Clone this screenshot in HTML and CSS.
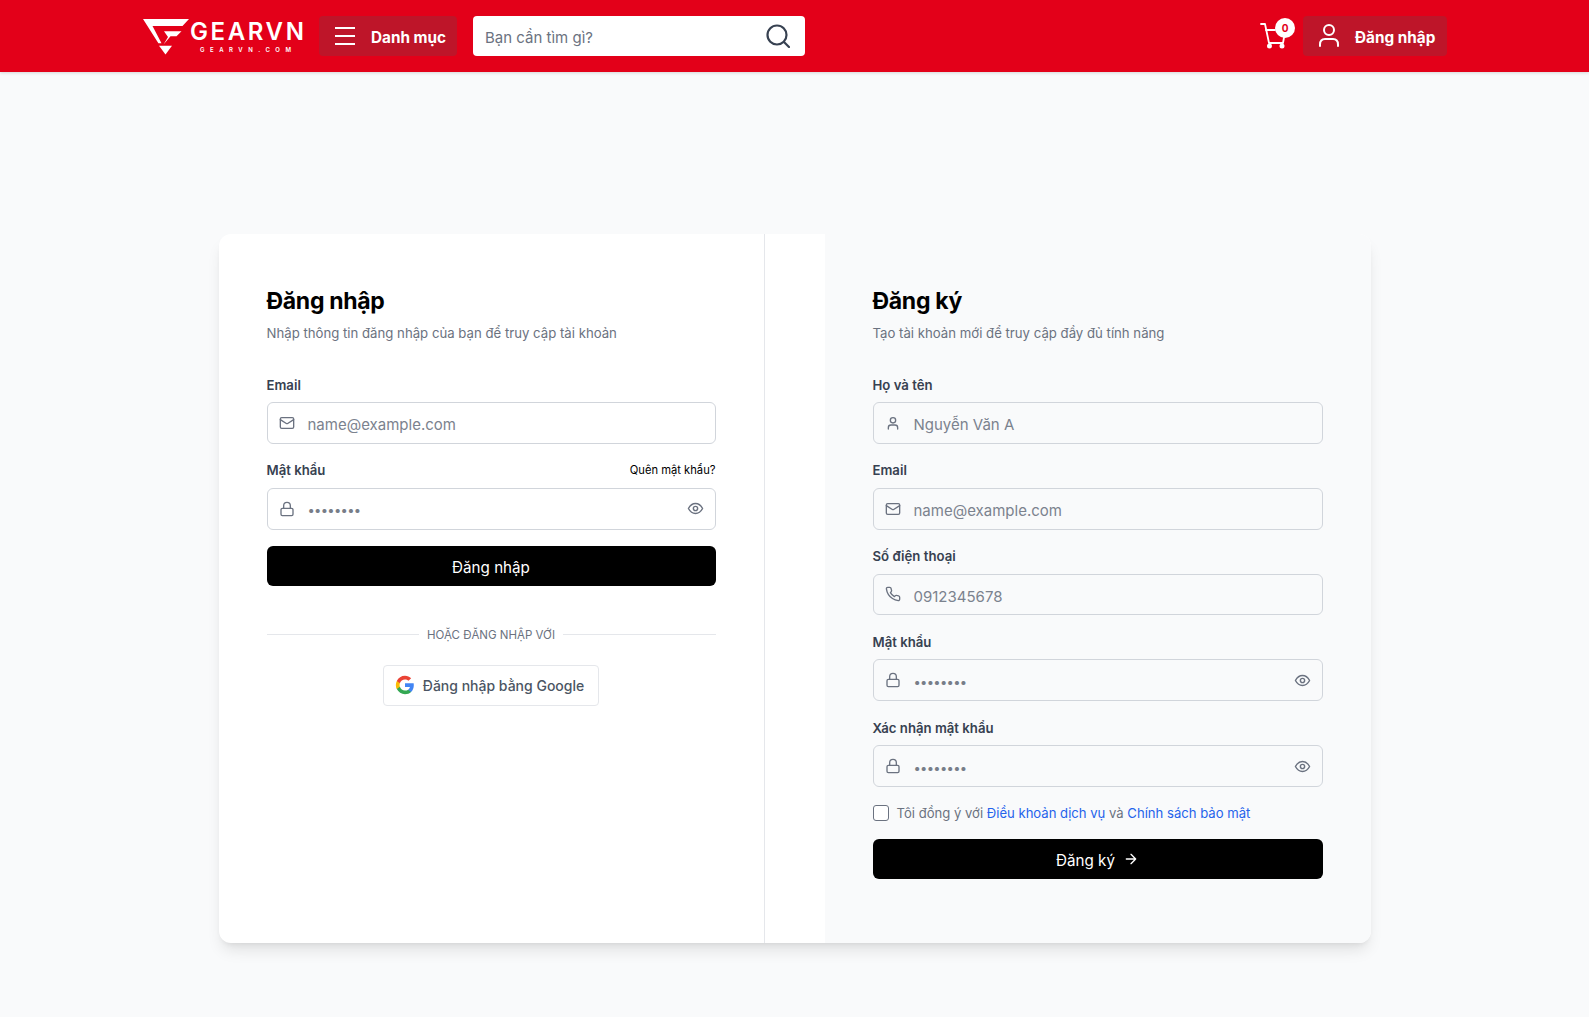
FILE: index.html
```html
<!doctype html>
<html lang="vi">
<head>
<meta charset="utf-8">
<title>Đăng nhập - GEARVN</title>
<link rel="stylesheet" href="styles.css">
</head>
<body>
<header class="topbar">
	<div class="topbar-inner">
		<a class="logo">
			<svg class="logo-mark" viewBox="0 0 46 36" width="46" height="36">
				<path fill="#fff" d="M0 0H46L39.500 7H9.500L18.500 24.300H15.400Z"/>
				<path fill="#fff" d="M21 12.200H38.500L33.500 17.200H27.500L20.500 25.500L25 18Z"/>
				<path fill="#fff" d="M16 26.800H29L22.500 35.500Z"/>
			</svg>
			<span class="logo-text">
				<span class="logo-name">GEARVN</span>
				<span class="logo-url">GEARVN.COM</span>
			</span>
		</a>
		<button class="bar-btn menu-btn">
			<svg viewBox="0 0 24 24" width="24" height="24" fill="none" stroke="#fff" stroke-width="2"><path d="M2 4H22M2 12H22M2 20H22"/></svg>
			<span>Danh mục</span>
		</button>
		<div class="search">
			<span class="search-text">Bạn cần tìm gì?</span>
			<svg viewBox="0 0 24 24" width="24" height="24" fill="none" stroke="#374151" stroke-width="2.200" stroke-linecap="round"><circle cx="11" cy="11" r="9.500"/><path d="M18 18L23 23"/></svg>
		</div>
		<div class="bar-right">
			<div class="cart">
				<svg viewBox="0 0 26 26" width="26" height="26" fill="none" stroke="#fff" stroke-width="1.800" stroke-linecap="round" stroke-linejoin="round"><path d="M1 1H5L9 20H23L25 9"/><path d="M6 7H15"/><circle cx="9.500" cy="23" r="1.600" fill="#fff"/><circle cx="22" cy="23" r="1.600" fill="#fff"/></svg>
				<span class="cart-badge">0</span>
			</div>
			<button class="bar-btn login-btn">
				<svg viewBox="0 0 24 24" width="24" height="24" fill="none" stroke="#fff" stroke-width="2" stroke-linecap="round"><circle cx="12" cy="6" r="5"/><path d="M3 22V20.500C3 17 5 15 8 15H16C19 15 21 17 21 20.500V22"/></svg>
				<span>Đăng nhập</span>
			</button>
		</div>
	</div>
</header>

<main class="page">
	<div class="auth-card">
		<section class="panel panel-login">
			<h2>Đăng nhập</h2>
			<p class="sub">Nhập thông tin đăng nhập của bạn để truy cập tài khoản</p>

			<div class="field">
				<div class="label-row"><label>Email</label></div>
				<div class="input">
					<svg class="ico" viewBox="0 0 24 24"><rect x="2" y="4" width="20" height="16" rx="2"/><path d="M22 7L13 12.700a2 2 0 0 1-2 0L2 7"/></svg>
					<span class="ph">name@example.com</span>
				</div>
			</div>
			<div class="field">
				<div class="label-row"><label>Mật khẩu</label><a class="forgot">Quên mật khẩu?</a></div>
				<div class="input">
					<svg class="ico" viewBox="0 0 24 24"><rect x="3" y="11" width="18" height="11" rx="2"/><path d="M7 11V7a5 5 0 0 1 10 0v4"/></svg>
					<span class="dots">••••••••</span>
					<svg class="ico eye" viewBox="0 0 24 24"><path d="M2 12C5 6.500 8.500 5 12 5S19 6.500 22 12C19 17.500 15.500 19 12 19S5 17.500 2 12Z"/><circle cx="12" cy="12" r="3"/></svg>
				</div>
			</div>
			<button class="submit submit-login"><span>Đăng nhập</span></button>

			<div class="divider"><span>HOẶC ĐĂNG NHẬP VỚI</span></div>

			<div class="google-wrap">
				<button class="google-btn">
					<svg viewBox="0 0 24 24" width="20" height="20"><path fill="#4285F4" d="M22.560 12.250c0-.780-.070-1.530-.200-2.250H12v4.260h5.920c-.260 1.370-1.040 2.530-2.210 3.310v2.770h3.570c2.080-1.920 3.280-4.740 3.280-8.090z"/><path fill="#34A853" d="M12 23c2.970 0 5.460-.980 7.280-2.660l-3.570-2.770c-.980.660-2.230 1.060-3.710 1.060-2.860 0-5.290-1.930-6.160-4.530H2.180v2.840C3.990 20.530 7.700 23 12 23z"/><path fill="#FBBC05" d="M5.840 14.090c-.220-.660-.350-1.360-.350-2.090s.130-1.430.350-2.090V7.070H2.180C1.430 8.550 1 10.220 1 12s.430 3.450 1.180 4.930l3.660-2.840z"/><path fill="#EA4335" d="M12 5.380c1.620 0 3.060.560 4.210 1.640l3.150-3.150C17.450 2.090 14.970 1 12 1 7.700 1 3.990 3.470 2.180 7.070l3.660 2.840c.870-2.600 3.300-4.530 6.160-4.530z"/></svg>
					<span>Đăng nhập bằng Google</span>
				</button>
			</div>
		</section>

		<section class="panel panel-register">
			<h2>Đăng ký</h2>
			<p class="sub">Tạo tài khoản mới để truy cập đầy đủ tính năng</p>

			<div class="field">
				<div class="label-row"><label>Họ và tên</label></div>
				<div class="input">
					<svg class="ico" viewBox="0 0 24 24"><circle cx="12" cy="8" r="4"/><path d="M5 21V19a4 4 0 0 1 4-4H15a4 4 0 0 1 4 4V21"/></svg>
					<span class="ph">Nguyễn Văn A</span>
				</div>
			</div>
			<div class="field">
				<div class="label-row"><label>Email</label></div>
				<div class="input">
					<svg class="ico" viewBox="0 0 24 24"><rect x="2" y="4" width="20" height="16" rx="2"/><path d="M22 7L13 12.700a2 2 0 0 1-2 0L2 7"/></svg>
					<span class="ph">name@example.com</span>
				</div>
			</div>
			<div class="field">
				<div class="label-row"><label>Số điện thoại</label></div>
				<div class="input">
					<svg class="ico" viewBox="0 0 24 24"><path d="M22 16.900v3a2 2 0 0 1-2.200 2 19.800 19.800 0 0 1-8.600-3.100 19.500 19.500 0 0 1-6-6A19.800 19.800 0 0 1 2.100 4.200 2 2 0 0 1 4.100 2h3a2 2 0 0 1 2 1.700c.100 1 .400 1.900.700 2.800a2 2 0 0 1-.500 2.100L8.100 9.900a16 16 0 0 0 6 6l1.300-1.300a2 2 0 0 1 2.100-.400c.900.300 1.800.600 2.800.700a2 2 0 0 1 1.700 2z"/></svg>
					<span class="ph">0912345678</span>
				</div>
			</div>
			<div class="field">
				<div class="label-row"><label>Mật khẩu</label></div>
				<div class="input">
					<svg class="ico" viewBox="0 0 24 24"><rect x="3" y="11" width="18" height="11" rx="2"/><path d="M7 11V7a5 5 0 0 1 10 0v4"/></svg>
					<span class="dots">••••••••</span>
					<svg class="ico eye" viewBox="0 0 24 24"><path d="M2 12C5 6.500 8.500 5 12 5S19 6.500 22 12C19 17.500 15.500 19 12 19S5 17.500 2 12Z"/><circle cx="12" cy="12" r="3"/></svg>
				</div>
			</div>
			<div class="field">
				<div class="label-row"><label>Xác nhận mật khẩu</label></div>
				<div class="input">
					<svg class="ico" viewBox="0 0 24 24"><rect x="3" y="11" width="18" height="11" rx="2"/><path d="M7 11V7a5 5 0 0 1 10 0v4"/></svg>
					<span class="dots">••••••••</span>
					<svg class="ico eye" viewBox="0 0 24 24"><path d="M2 12C5 6.500 8.500 5 12 5S19 6.500 22 12C19 17.500 15.500 19 12 19S5 17.500 2 12Z"/><circle cx="12" cy="12" r="3"/></svg>
				</div>
			</div>
			<div class="agree">
				<span class="check"></span>
				<span>Tôi đồng ý với <a>Điều khoản dịch vụ</a> và <a>Chính sách bảo mật</a></span>
			</div>
			<button class="submit submit-register">
				<span>Đăng ký</span>
				<svg viewBox="0 0 24 24" width="16" height="16" fill="none" stroke="#fff" stroke-width="2" stroke-linecap="round" stroke-linejoin="round"><path d="M5 12H19M12 5L19 12L12 19"/></svg>
			</button>
		</section>
	</div>
</main>
</body>
</html>
```

FILE: styles.css
```css
*{
	box-sizing:border-box;
}
body{
	margin:0;
	background:#f9fafb;
	font-family:Inter,"Noto Sans",sans-serif;
	color:#111827;
}
button{
	font-family:inherit;
	border:0;
}
.topbar{
	height:72px;
	background:#e30019;
	box-shadow:0 1px 3px rgba(0,0,0,.15);
}
.topbar-inner{
	display:flex;
	align-items:center;
	padding:16px 142px 16px 143px;
}
.logo{
	display:flex;
	align-items:flex-start;
	width:176px;
	height:38px;
	padding-top:2px;
	color:#fff;
}
.logo-mark{
	flex:none;
}
.logo-text{
	display:flex;
	flex-direction:column;
	align-items:center;
	margin-left:1px;
	padding-top:2px;
}
.logo-name{
	font-family:Inter,sans-serif;
	font-weight:600;
	font-size:24px;
	line-height:21px;
	letter-spacing:2.600px;
}
.logo-url{
	font-family:Inter,sans-serif;
	font-weight:600;
	font-size:6px;
	line-height:8px;
	letter-spacing:5.500px;
	margin-top:4px;
}
.bar-btn{
	display:flex;
	align-items:center;
	height:40px;
	background:#be1529;
	border-radius:4px;
	color:#fff;
	font-size:15.300px;
	font-weight:700;
}
.bar-btn span{
	padding-top:2px;
}
.menu-btn{
	width:138px;
	padding:0 0 0 14px;
	gap:14px;
}
.search{
	display:flex;
	align-items:center;
	justify-content:space-between;
	width:332px;
	height:40px;
	margin-left:16px;
	padding:0 15px 0 12px;
	background:#fff;
	border-radius:4px;
}
.search-text{
	padding-top:2px;
	font-size:15px;
	color:#6b7280;
}
.bar-right{
	display:flex;
	align-items:center;
	margin-left:auto;
}
.cart{
	position:relative;
	width:43px;
	height:32px;
	padding-top:3px;
}
.cart-badge{
	position:absolute;
	top:-2px;
	left:15px;
	width:20px;
	height:20px;
	border-radius:50%;
	background:#fff;
	color:#e30019;
	font-size:10px;
	font-weight:700;
	line-height:20px;
	text-align:center;
}
.login-btn{
	width:144px;
	padding:0 0 0 14px;
	gap:14px;
}
.page{
	padding:162px 0 74px;
}
.auth-card{
	display:grid;
	grid-template-columns:546px 546px;
	gap:60px;
	width:1152px;
	height:709px;
	margin:0 auto;
	background:#fff;
	border-radius:12px;
	overflow:hidden;
	box-shadow:0 10px 15px -3px rgba(0,0,0,.1),0 4px 6px -4px rgba(0,0,0,.1);
}
.panel{
	padding:47px 48px 48px;
}
.panel-login{
	border-right:1px solid #e5e7eb;
}
.panel-register{
	background:#f9fafb;
}
h2{
	margin:0;
	font-size:23px;
	line-height:40px;
	font-weight:700;
	letter-spacing:-.3px;
	color:#000;
}
.sub{
	margin:2px 0 31px;
	font-size:13.200px;
	line-height:20px;
	color:#6b7280;
}
.field{
	margin-bottom:16px;
}
.label-row{
	display:flex;
	justify-content:space-between;
	align-items:center;
	height:20px;
	margin-bottom:8px;
}
label{
	padding-top:1px;
	font-size:13.200px;
	font-weight:600;
	color:#374151;
}
.forgot{
	font-size:11.200px;
	color:#000;
}
.input{
	display:flex;
	align-items:center;
	height:41.800px;
	padding:0 11px;
	border:1px solid #d1d5db;
	border-radius:6px;
}
.ico{
	flex:none;
	width:16px;
	height:16px;
	fill:none;
	stroke:#6b7280;
	stroke-width:2;
	stroke-linecap:round;
	stroke-linejoin:round;
}
.ph{
	margin:4px 0 0 13px;
	font-size:15px;
	color:#7b828e;
}
.dots{
	margin:3px 0 0 13px;
	font-size:13px;
	letter-spacing:-.7px;
	color:#777d88;
}
.eye{
	margin-left:auto;
	width:17px;
	height:17px;
}
.submit{
	display:flex;
	align-items:center;
	justify-content:center;
	gap:8px;
	width:100%;
	height:40px;
	background:#000;
	color:#fff;
	font-size:15.200px;
	border-radius:6px;
}
.submit span{
	padding-top:3px;
}
.divider{
	display:flex;
	align-items:center;
	gap:8px;
	margin-top:42px;
	font-size:11.500px;
	color:#6b7280;
}
.divider::before,.divider::after{
	content:"";
	flex:1;
	height:1px;
	background:#e5e7eb;
}
.google-wrap{
	display:flex;
	justify-content:center;
	margin-top:23px;
}
.google-btn{
	display:flex;
	align-items:center;
	gap:8px;
	height:41px;
	padding:0 14px 0 11px;
	background:#fff;
	border:1px solid #e5e7eb;
	border-radius:4px;
	font-size:14px;
	font-weight:500;
	color:#4b5563;
}
.agree{
	display:flex;
	align-items:center;
	gap:8px;
	height:20px;
	margin:.5px 0 16px;
	font-size:13.100px;
	color:#6b7280;
}
.check{
	width:16px;
	height:16px;
	background:#fff;
	border:1px solid #6b7280;
	border-radius:3px;
}
.agree a{
	color:#2563eb;
}
```
